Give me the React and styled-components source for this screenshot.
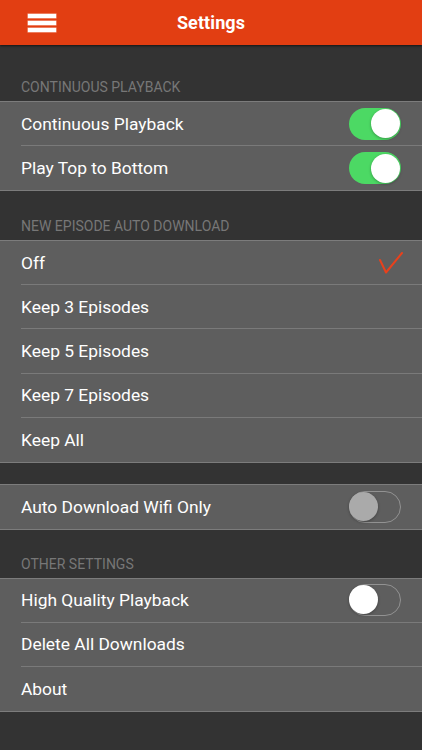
import React from "react";
import styled, { createGlobalStyle } from "styled-components";

const GlobalStyle = createGlobalStyle`
  html, body {
    margin: 0;
    padding: 0;
    background: #333333;
  }
  body {
    font-family: Roboto, "Liberation Sans", Arial, sans-serif;
    -webkit-font-smoothing: antialiased;
  }
`;

const Page = styled.div`
  min-height: 100vh;
  background: #333333;
`;

const NavBar = styled.header`
  position: relative;
  z-index: 1;
  height: 45px;
  background: #e23e12;
  box-shadow: 0 1px 2px rgba(0, 0, 0, 0.6);
  display: flex;
  align-items: center;
  justify-content: center;
`;

const MenuButton = styled.button`
  position: absolute;
  left: 28px;
  top: 14px;
  width: 28px;
  height: 18px;
  padding: 0;
  border: none;
  background: transparent;
  display: flex;
  flex-direction: column;
  justify-content: space-between;
  span {
    display: block;
    height: 4px;
    background: #fff;
    box-shadow: 0 0 0 0.5px rgba(255, 220, 210, 0.8);
  }
`;

const Title = styled.h1`
  margin: 0;
  color: #fff;
  font-size: 18px;
  font-weight: 700;
  letter-spacing: 0.1px;
`;

const Section = styled.section`
  margin-top: ${(p) => p.$top}px;
`;

const SectionTitle = styled.div`
  height: 22px;
  box-sizing: border-box;
  padding: 0 21px 6px;
  display: flex;
  align-items: flex-end;
  color: #777777;
  font-size: 14px;
  line-height: 16px;
  text-transform: uppercase;
`;

const Group = styled.div`
  background: #5e5e5e;
  border-top: 1px solid #7c7c7c;
  border-bottom: 1px solid #7c7c7c;
`;

const Row = styled.div`
  padding-left: 21px;
  &:last-child > div {
    border-bottom: none;
  }
`;

const RowInner = styled.div`
  box-sizing: border-box;
  height: 44.2px;
  padding-right: 21px;
  display: flex;
  align-items: center;
  justify-content: space-between;
  border-bottom: 1px solid #7a7a7a;
  color: #fff;
  font-size: 17.4px;
`;

const Track = styled.div`
  position: relative;
  box-sizing: border-box;
  width: 52px;
  height: 32px;
  border-radius: 16px;
  background: ${(p) => (p.$on ? "#4cd964" : "transparent")};
  border: ${(p) => (p.$on ? "none" : "1.5px solid #929292")};
`;

const Knob = styled.div`
  position: absolute;
  top: ${(p) => (p.$on ? 1.5 : 0)}px;
  ${(p) => (p.$on ? "right: 1px;" : "left: -1px;")}
  width: 29px;
  height: 29px;
  border-radius: 50%;
  background: ${(p) => (p.$disabled ? "#aaaaaa" : "#ffffff")};
  box-shadow: 0 1px 3px rgba(0, 0, 0, 0.3);
`;

function Toggle({ on, disabled }) {
  return (
    <Track $on={on}>
      <Knob $on={on} $disabled={disabled} />
    </Track>
  );
}

function Check() {
  return (
    <svg width="24" height="22" viewBox="0 0 24 22" style={{ marginRight: -2 }}>
      <polyline
        points="1,8 7,20.5 23,1"
        fill="none"
        stroke="#e8411c"
        strokeWidth="2"
        strokeLinecap="round"
        strokeLinejoin="round"
      />
    </svg>
  );
}

const sections = [
  {
    top: 34,
    title: "Continuous Playback",
    rows: [
      { label: "Continuous Playback", toggle: true, on: true },
      { label: "Play Top to Bottom", toggle: true, on: true },
    ],
  },
  {
    top: 26.6,
    title: "New Episode Auto Download",
    rows: [
      { label: "Off", check: true },
      { label: "Keep 3 Episodes" },
      { label: "Keep 5 Episodes" },
      { label: "Keep 7 Episodes" },
      { label: "Keep All" },
    ],
  },
  {
    top: 21.3,
    rows: [{ label: "Auto Download Wifi Only", toggle: true, on: false, disabled: true }],
  },
  {
    top: 25.2,
    title: "Other Settings",
    rows: [
      { label: "High Quality Playback", toggle: true, on: false },
      { label: "Delete All Downloads" },
      { label: "About" },
    ],
  },
];

export default function App() {
  return (
    <Page>
      <GlobalStyle />
      <NavBar>
        <MenuButton aria-label="Menu">
          <span />
          <span />
          <span />
        </MenuButton>
        <Title>Settings</Title>
      </NavBar>
      {sections.map((s, i) => (
        <Section key={i} $top={s.top}>
          {s.title && <SectionTitle>{s.title}</SectionTitle>}
          <Group>
            {s.rows.map((r) => (
              <Row key={r.label}>
                <RowInner>
                  <span>{r.label}</span>
                  {r.toggle && <Toggle on={r.on} disabled={r.disabled} />}
                  {r.check && <Check />}
                </RowInner>
              </Row>
            ))}
          </Group>
        </Section>
      ))}
    </Page>
  );
}
